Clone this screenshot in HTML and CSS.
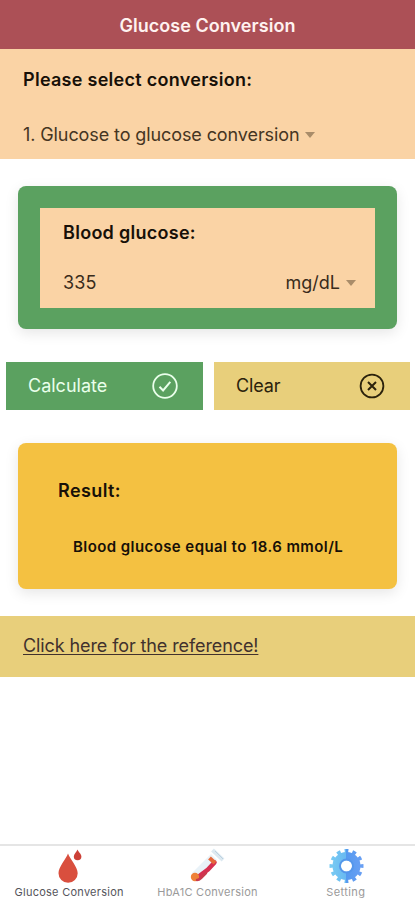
FILE: index.html
```html
<!DOCTYPE html>
<html lang="en">
<head>
<meta charset="utf-8">
<title>Glucose Conversion</title>
<link rel="stylesheet" href="styles.css">
</head>
<body>
<header class="topbar"><h1 class="title">Glucose Conversion</h1></header>
<section class="picker">
  <h2 class="heading select-heading">Please select conversion:</h2>
  <div class="select"><span class="select-text">1. Glucose to glucose conversion</span><i class="caret"></i></div>
</section>
<section class="card input-card">
  <div class="field">
    <h2 class="heading glucose-heading">Blood glucose:</h2>
    <div class="row"><span class="value">335</span><span class="unit">mg/dL</span><i class="caret"></i></div>
  </div>
</section>
<div class="actions">
  <button class="btn calculate"><span class="calc-text">Calculate</span>
    <svg width="28" height="28" viewBox="0 0 28 28" fill="none" stroke="currentColor" stroke-width="1.8"><circle cx="14" cy="14" r="11.8"/><path d="M8.5 14.7l3.6 3.7 7.2-8.5" stroke-width="2"/></svg>
  </button>
  <button class="btn clear"><span class="clear-text">Clear</span>
    <svg width="28" height="28" viewBox="0 0 28 28" fill="none" stroke="currentColor" stroke-width="1.8"><circle cx="14" cy="14" r="11.4"/><path d="M10 10l8 8M18 10l-8 8" stroke-width="2"/></svg>
  </button>
</div>
<section class="card result">
  <h2 class="heading result-heading">Result:</h2>
  <p class="answer"><span class="answer-text">Blood glucose equal to 18.6 mmol/L</span></p>
</section>
<div class="reference"><a class="link">Click here for the reference!</a></div>
<nav class="tabs">
  <div class="tab active">
    <svg width="36" height="36" viewBox="0 0 36 36"><path d="M17 5.5C15 11 7.500 19 7.500 25.200a9.600 9.600 0 0 0 19.200 0C26.700 19 19 11 17 5.500z" fill="#d94f3e"/><path d="M26.500 1.500c-.8 2.600-3.700 4.300-3.700 7a3.800 3.800 0 0 0 7.600 0c0-2.700-3-4.400-3.900-7z" fill="#cc4037"/></svg>
    <span class="tab-glucose">Glucose Conversion</span>
  </div>
  <div class="tab">
    <svg width="36" height="36" viewBox="0 0 36 36"><path d="M3 25L22 6l6 6L9 31z" fill="#e9f2f8"/><path d="M7 30.500L19 21.500 25.500 14.500" fill="none" stroke="#d62f51" stroke-width="4.500" stroke-linejoin="round" stroke-linecap="round"/><path d="M20.500 10l5.500 5" stroke="#e56739" stroke-width="4"/><circle cx="6" cy="29" r="4.200" fill="#ee8138"/><path d="M8 32q2 0 4-2l5-5" fill="none" stroke="#c83a4d" stroke-width="2.500" stroke-linecap="round"/><path d="M23.500 2l10.500 10" stroke="#dce9f1" stroke-width="4"/><path d="M26 3l8 8" stroke="#bdd1df" stroke-width="1"/></svg>
    <span class="tab-hba">HbA1C Conversion</span>
  </div>
  <div class="tab">
    <svg width="36" height="36" viewBox="0 0 36 36"><defs><linearGradient id="gear" gradientUnits="userSpaceOnUse" x1="1" y1="18" x2="35" y2="18"><stop offset="0" stop-color="#7bcdf3"/><stop offset=".5" stop-color="#68b9f1"/><stop offset=".5" stop-color="#5599ef"/><stop offset="1" stop-color="#6aa0f4"/></linearGradient></defs><circle cx="18.500" cy="18" r="9.750" fill="none" stroke="url(#gear)" stroke-width="8.500"/><circle cx="18.500" cy="18" r="15" fill="none" stroke="url(#gear)" stroke-width="4" pathLength="120" stroke-dasharray="4.800 5.200" stroke-dashoffset="2.400"/><circle cx="18.500" cy="18" r="6.600" fill="none" stroke="#5596ea" stroke-width="1.800"/></svg>
    <span class="tab-setting">Setting</span>
  </div>
</nav>
</body>
</html>
```
FILE: styles.css
```css
* { box-sizing: border-box; }
body { margin: 0; width: 415px; height: 900px; overflow: hidden; display: flex; flex-direction: column; background: #fff; color: #171008; font-family: Inter, "Liberation Sans", sans-serif; font-size: 18px; }
h1, h2, p { margin: 0; }
span, a, h1, h2 { white-space: nowrap; }
.topbar { height: 49px; flex: none; display: flex; align-items: center; justify-content: center; background: #ac5056; color: #fff2f0; }
.title { font-size: 18px; font-weight: 600; line-height: 24px; padding-top: 2px; letter-spacing: .04px; }
.picker { height: 110px; flex: none; padding: 19px 23px 0; background: #fad3a5; }
.heading { font-size: 18px; font-weight: 600; line-height: 24px; letter-spacing: .28px; }
.select { margin-top: 31px; display: flex; align-items: center; gap: 6px; line-height: 24px; color: #453522; }
.select-text { letter-spacing: -.1px; }
.caret { flex: none; border: 5px solid transparent; border-top: 6px solid #a98c69; border-bottom: 0; }
.card { flex: none; margin: 0 18px; border-radius: 8px; box-shadow: 0 4px 14px rgba(0,0,0,.1); }
.input-card { height: 143px; margin-top: 27px; padding: 22px; background: #5ba160; }
.field { height: 100px; padding: 13px 19px 0 23px; background: #fad3a5; }
.row { display: flex; align-items: center; margin-top: 26px; line-height: 24px; color: #392b1b; }
.value { letter-spacing: .15px; }
.unit { margin-left: auto; margin-right: 6px; }
.actions { flex: none; display: grid; grid-template-columns: 197px 196px; gap: 11px; margin: 33px 0 0 6px; }
.btn { height: 48px; display: flex; align-items: center; justify-content: space-between; border: 0; padding: 0 24px 0 22px; font: 400 18px/24px Inter, sans-serif; }
.clear-text { letter-spacing: -.15px; }
.calculate { background: #5ba160; color: #eaffeb; }
.clear { background: #e8cf7b; color: #2b220c; }
.result { height: 146px; margin-top: 33px; padding: 36px 40px 0; background: #f4c141; }
.result-heading { letter-spacing: .4px; }
.answer { margin-top: 34px; padding-left: 15px; font-size: 15px; font-weight: 600; line-height: 20px; letter-spacing: .42px; }
.reference { flex: none; height: 61px; margin-top: 27px; padding: 18px 23px; line-height: 24px; background: #e8cf7b; color: #41312d; }
.link { letter-spacing: -.1px; text-decoration: underline; text-decoration-thickness: 1px; text-underline-offset: 2px; }
.tabs { height: 56px; flex: none; margin-top: auto; border-top: 2px solid #e5e5e5; display: grid; grid-template-columns: repeat(3, 1fr); }
.tab { display: flex; flex-direction: column; align-items: center; padding-top: 2px; font-size: 11px; line-height: 14px; color: #9a9a9a; }
.tab svg { flex: none; }
.tab span { margin-top: 1px; letter-spacing: .26px; }
.tab .tab-setting { letter-spacing: .4px; }
.active { color: #55545b; }
```
